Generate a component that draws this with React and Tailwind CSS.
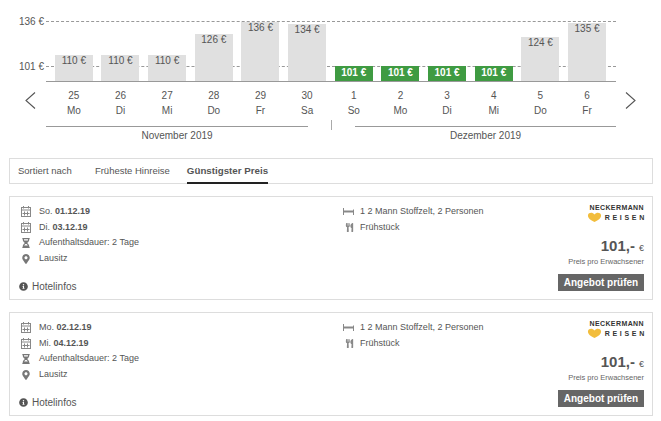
import { FaHourglassHalf, FaInfoCircle, FaMapMarkerAlt, FaUtensils } from 'react-icons/fa'

const DAYS = [
  { d: 25, w: 'Mo', p: 110, h: 26 },
  { d: 26, w: 'Di', p: 110, h: 26 },
  { d: 27, w: 'Mi', p: 110, h: 26 },
  { d: 28, w: 'Do', p: 126, h: 47 },
  { d: 29, w: 'Fr', p: 136, h: 59 },
  { d: 30, w: 'Sa', p: 134, h: 57 },
  { d: 1, w: 'So', p: 101, h: 15, best: true },
  { d: 2, w: 'Mo', p: 101, h: 15, best: true },
  { d: 3, w: 'Di', p: 101, h: 15, best: true },
  { d: 4, w: 'Mi', p: 101, h: 15, best: true },
  { d: 5, w: 'Do', p: 124, h: 44 },
  { d: 6, w: 'Fr', p: 135, h: 58 },
]

const OFFERS = [
  { from: ['So.', '01.12.19'], to: ['Di.', '03.12.19'] },
  { from: ['Mo.', '02.12.19'], to: ['Mi.', '04.12.19'] },
]

function CalendarIcon() {
  return (
    <svg width="10" height="11" viewBox="0 0 10 11" fill="none" stroke="#888" strokeWidth="1">
      <rect x="0.5" y="1.5" width="9" height="9" />
      <path d="M0.5 4h9M2.500 0v2.500M7.500 0v2.500M3.500 5.500v4M6.500 5.500v4M1.500 7.500h7" />
    </svg>
  )
}

function BedIcon() {
  return (
    <svg width="11" height="7" viewBox="0 0 11 7" fill="none" stroke="#888">
      <path d="M0.5 0v7M10.500 1.500v5.500" />
      <path d="M1 3.500h9" strokeWidth="2" />
    </svg>
  )
}

function Chevron({ right }) {
  return (
    <svg width="11" height="17" viewBox="0 0 11 17" fill="none" stroke="#555" strokeWidth="1.100">
      <path d={right ? 'M1 0.500l9 8-9 8' : 'M10 0.500l-9 8 9 8'} />
    </svg>
  )
}

function Logo() {
  return (
    <div className="flex flex-col items-end leading-none text-[#333]">
      <span className="text-[7px] font-bold tracking-[0.4px]">NECKERMANN</span>
      <div className="flex items-center mt-px">
        <svg width="15" height="10" viewBox="0 0 14 10" className="mr-[3px]">
          <path d="M7 10C3 8 0 6 0.500 3 1 0.500 5 0 7 2.500 9 0 13 0.500 13.500 3 14 6 11 8 7 10Z" fill="#f2bd3c" />
        </svg>
        <span className="text-[7px] font-bold tracking-[2.700px] mr-[-3px]">REISEN</span>
      </div>
    </div>
  )
}

function InfoRow({ icon, children }) {
  return (
    <div className="flex items-center h-[15.600px]">
      <span className="w-[20px] pl-[2px] flex items-center text-[#777]">{icon}</span>
      <span>{children}</span>
    </div>
  )
}

function OfferCard({ offer }) {
  return (
    <div className="border border-[#ddd] h-[104px] flex text-[9px] text-[#555] pl-[9px] pr-[8px] pt-[7px]">
      <div className="w-[324px] flex flex-col">
        <InfoRow icon={<CalendarIcon />}>{offer.from[0]} <span className="font-bold">{offer.from[1]}</span></InfoRow>
        <InfoRow icon={<CalendarIcon />}>{offer.to[0]} <span className="font-bold">{offer.to[1]}</span></InfoRow>
        <InfoRow icon={<FaHourglassHalf size={10} />}>Aufenthaltsdauer: 2 Tage</InfoRow>
        <InfoRow icon={<FaMapMarkerAlt size={10} />}>Lausitz</InfoRow>
        <div className="flex items-center mt-auto mb-[5px] text-[10px]">
          <FaInfoCircle size={9} className="mr-[4px]" />
          Hotelinfos
        </div>
      </div>
      <div className="flex-1 flex flex-col">
        <div className="flex items-center h-[15.600px]">
          <span className="w-[17px] flex items-center"><BedIcon /></span>
          1 2 Mann Stoffzelt, 2 Personen
        </div>
        <div className="flex items-center h-[15.600px]">
          <span className="w-[17px] pl-[2px] flex items-center text-[#888]"><FaUtensils size={9} /></span>
          Frühstück
        </div>
      </div>
      <div className="flex flex-col items-end w-[100px] shrink-0">
        <Logo />
        <div className="mt-[15px] flex items-baseline text-[#555] leading-[18px]">
          <span className="text-[15px] font-bold">101,-</span>
          <span className="text-[9px] ml-[4px]">€</span>
        </div>
        <div className="text-[7.500px] leading-[10px] text-[#666]">Preis pro Erwachsener</div>
        <button className="mt-[7px] w-[86px] h-[17px] bg-[#666] text-white text-[10px] font-bold leading-none">
          Angebot prüfen
        </button>
      </div>
    </div>
  )
}

export default function App() {
  return (
    <div className="w-[661px] h-[421px] bg-white font-['Liberation_Sans',Arial,sans-serif] text-[#555] overflow-hidden">
      <div className="pt-[14px] flex">
        <div className="w-[46px] shrink-0" />
        {/* Chart */}
        <div className="w-[570px] relative">
          <div className="absolute left-0 right-0 top-[7px] border-t border-dashed border-[#999]" />
          <div className="absolute left-0 right-0 top-[52px] border-t border-dashed border-[#999]" />
          <span className="absolute right-full mr-[2px] top-[1px] text-[10px] leading-[13px] whitespace-nowrap">136 €</span>
          <span className="absolute right-full mr-[2px] top-[46px] text-[10px] leading-[13px] whitespace-nowrap">101 €</span>
          <div className="relative h-[68px] flex items-end pl-[4.500px] border-b border-[#999] pr-[5.500px]">
            {DAYS.map(day => (
              <div key={day.d} className="w-[46.670px] flex justify-center">
                <div
                  className={`w-[38px] text-center text-[10px] ${day.best ? 'bg-[#3f9b42] text-white font-bold leading-[13px]' : 'bg-[#e0e0e0] text-[#555] leading-[11px]'}`}
                  style={{ height: day.h }}
                >
                  {day.p} €
                </div>
              </div>
            ))}
          </div>
          <div className="flex pl-[4.500px] pr-[5.500px] pt-[6px]">
            {DAYS.map(day => (
              <div key={day.d} className="w-[46.670px] text-center text-[10px] leading-[15px]">
                <div>{day.d}</div>
                <div>{day.w}</div>
              </div>
            ))}
          </div>
          <div className="flex items-start mt-[6px] relative">
            <div className="w-[262px] border-t border-[#999] text-center text-[10px] pt-[2px] leading-[14px] mt-[2px]">November 2019</div>
            <div className="w-[1px] h-[10px] bg-[#aaa] ml-[22.500px] mr-[23.500px] mt-[-4px]" />
            <div className="flex-1 border-t border-[#999] text-center text-[10px] pt-[2px] leading-[14px] mt-[2px]">Dezember 2019</div>
          </div>
          <div className="absolute left-[-21px] top-[78px]"><Chevron /></div>
          <div className="absolute right-[-20px] top-[78px]"><Chevron right /></div>
        </div>
      </div>

      {/* Sort bar */}
      <div className="ml-[9px] mr-[8px] mt-[15px] h-[26px] border border-[#ddd] flex text-[9.500px] pl-[8px] leading-[24px]">
        <span>Sortiert nach</span>
        <span className="ml-[23px]">Früheste Hinreise</span>
        <span className="ml-[17px] h-[25px] font-bold text-[9.750px] border-b-2 border-[#222]">Günstigster Preis</span>
      </div>

      <div className="ml-[9px] mr-[8px] mt-[12px] flex flex-col gap-[12px]">
        {OFFERS.map(offer => <OfferCard key={offer.from[1]} offer={offer} />)}
      </div>
    </div>
  )
}
